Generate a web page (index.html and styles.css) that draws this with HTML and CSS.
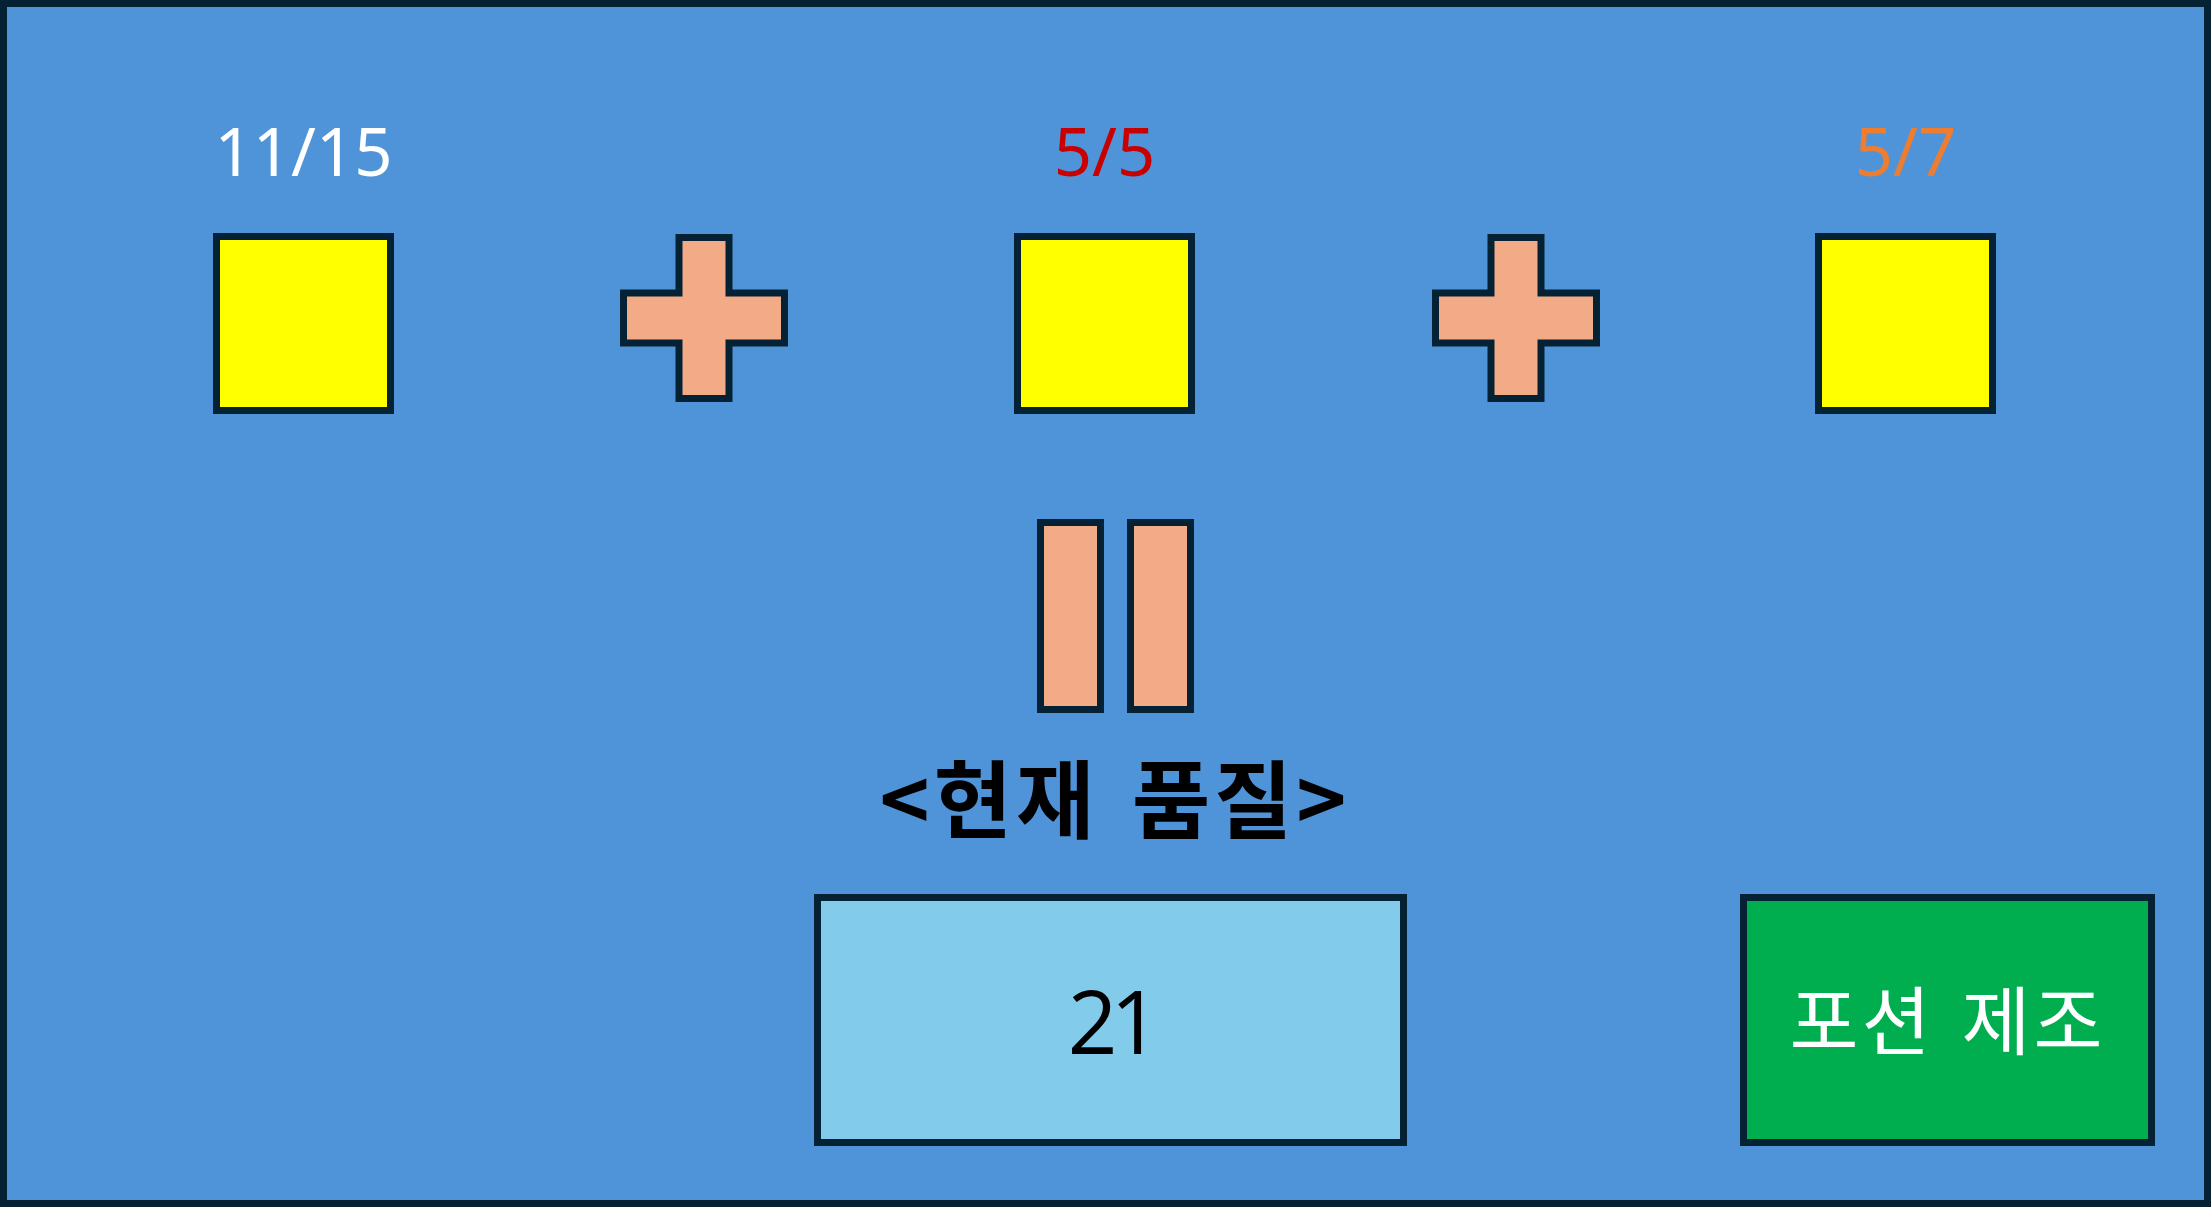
FILE: index.html
```html
<!DOCTYPE html>
<html lang="ko">
<head>
   <meta charset="UTF-8">
   <meta name="viewport" content="width=device-width, initial-scale=1.0">
   <title>포션 제조</title>
   <link rel="stylesheet" href="styles.css">
</head>
<body>
   <div class="frame">
      <div class="recipe">
         <div class="count white">11/15</div>
         <div></div>
         <div class="count red">5/5</div>
         <div></div>
         <div class="count orange">5/7</div>

         <div class="slot"></div>
         <svg class="plus" viewBox="0 0 168 168">
            <polygon points="59,3.5 109,3.5 109,59 164.5,59 164.5,109 109,109 109,164.5 59,164.5 59,109 3.5,109 3.5,59 59,59"/>
         </svg>
         <div class="slot"></div>
         <svg class="plus last" viewBox="0 0 168 168">
            <polygon points="59,3.5 109,3.5 109,59 164.5,59 164.5,109 109,109 109,164.5 59,164.5 59,109 3.5,109 3.5,59 59,59"/>
         </svg>
         <div class="slot"></div>
      </div>

      <div class="middle">
         <div class="equals">
            <div class="bar"></div>
            <div class="bar"></div>
         </div>
         <h2 class="title">&lt;현재 품질&gt;</h2>
      </div>

      <div class="bottom">
         <div class="quality">21</div>
         <button class="brew">포션 제조</button>
      </div>
   </div>
</body>
</html>
```

FILE: styles.css
```css
*{
   margin: 0;
   padding: 0;
   box-sizing: border-box;
}
body{
   background: #4f94d9;
}
.frame{
   width: 2211px;
   height: 1207px;
   border: 7px solid #042233;
   background: #4f94d9;
   padding-top: 110px;
   display: flex;
   flex-direction: column;
}
/* ingredients row */
.recipe{
   display: grid;
   grid-template-columns: 181px 168px 181px 168px 181px;
   column-gap: 226px;
   row-gap: 49px;
   padding-left: 206px;
   align-items: start;
}
.count{
   font-family: "Noto Sans", "Open Sans", sans-serif;
   font-size: 67px;
   line-height: 1;
   text-align: center;
   white-space: nowrap;
}
.count.white{
   color: #fff;
}
.count.red{
   color: #c80000;
}
.count.orange{
   color: #ed7d31;
}
.slot{
   width: 181px;
   height: 181px;
   background: #ffff00;
   border: 7px solid #042233;
}
.plus{
   width: 168px;
   height: 168px;
   margin-top: 1px;
   display: block;
}
.plus.last{
   margin-left: 11px;
}
.plus polygon{
   fill: #f2ab86;
   stroke: #042233;
   stroke-width: 7;
}
/* equals + title */
.middle{
   display: flex;
   flex-direction: column;
   align-items: center;
   padding-left: 19px;
}
.equals{
   display: flex;
   gap: 23px;
   margin-top: 105px;
}
.bar{
   width: 67px;
   height: 194px;
   background: #f2ab86;
   border: 7px solid #042233;
}
.title{
   margin-top: 39px;
   font-family: "Noto Sans CJK KR", "Noto Sans", sans-serif;
   font-size: 85px;
   font-weight: 700;
   line-height: 1;
   letter-spacing: 4px;
   word-spacing: 6px;
   color: #000;
}
/* bottom row */
.bottom{
   display: flex;
   margin-top: 57px;
   padding-left: 807px;
   padding-right: 49px;
}
.quality{
   width: 593px;
   height: 252px;
   background: #83cbea;
   border: 7px solid #042233;
   display: flex;
   align-items: center;
   justify-content: center;
   font-family: "Open Sans", "Noto Sans", sans-serif;
   font-weight: 400;
   font-size: 87px;
   line-height: 1;
   letter-spacing: -7px;
   color: #000;
}
.brew{
   margin-left: auto;
   width: 415px;
   height: 252px;
   background: #00ae4f;
   border: 7px solid #042233;
   color: #fff;
   font-family: "Noto Sans CJK KR", "Noto Sans", sans-serif;
   font-size: 75px;
   font-weight: 400;
   line-height: 1;
   letter-spacing: 3px;
   word-spacing: 4px;
   padding-bottom: 8px;
   cursor: pointer;
}
```
